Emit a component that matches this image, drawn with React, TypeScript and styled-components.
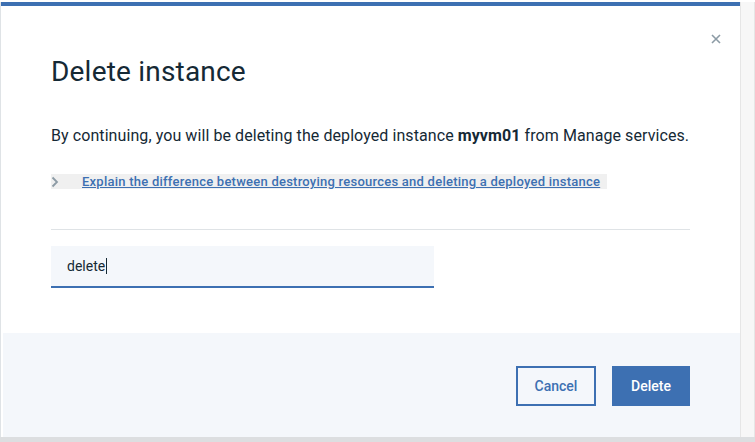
import React from "react";
import styled, { createGlobalStyle } from "styled-components";

const Global = createGlobalStyle`
  html, body { margin: 0; padding: 0; background: #ffffff; }
  body { font-family: Roboto, "Liberation Sans", sans-serif; color: #152935; }
  * { box-sizing: border-box; }
`;

const Page = styled.div`
  width: 755px;
  height: 442px;
  display: flex;
  flex-direction: column;
  overflow: hidden;
  background: #ffffff;
`;

const Stage = styled.div`
  flex: 1;
  display: flex;
  padding-top: 2px;
  background: #ffffff;
`;

const LeftEdge = styled.div`
  width: 1px;
  background: #dfe3e6;
`;

const Modal = styled.div`
  width: 739px;
  display: flex;
  flex-direction: column;
  border-top: 4px solid #3d70b2;
  background: #ffffff;
`;

const RightGutter = styled.div`
  flex: 1;
  border-left: 1px solid #e6e6e6;
  border-right: 1px solid #e6e6e6;
  background: #f7f7f7;
`;

const BottomShadow = styled.div`
  height: 5px;
  background: #dcdee0;
`;

const Header = styled.div`
  position: relative;
  padding: 50px 50px 0 50px;
`;

const Title = styled.h2`
  margin: 0;
  font-size: 28px;
  font-weight: 400;
  line-height: 32px;
  letter-spacing: 0.2px;
  color: #152935;
`;

const Close = styled.button`
  position: absolute;
  top: 26px;
  right: 17px;
  width: 14px;
  height: 14px;
  padding: 0;
  border: none;
  background: transparent;
  display: flex;
  align-items: center;
  justify-content: center;
`;

const Body = styled.div`
  flex: 1;
  padding: 0 50px;
  display: flex;
  flex-direction: column;
`;

const Para = styled.p`
  margin: 37px 0 0 0;
  font-size: 16px;
  line-height: 22px;
  letter-spacing: 0.08px;
  white-space: nowrap;
  color: #152935;
  b { font-weight: 700; }
`;

const Disclosure = styled.div`
  margin-top: 27px;
  height: 15px;
  width: 556px;
  display: flex;
  align-items: center;
  background: #f0f0f0;
`;

const Chevron = styled.span`
  width: 31px;
  display: flex;
  align-items: center;
`;

const LinkText = styled.a`
  font-size: 13px;
  font-weight: 500;
  letter-spacing: 0.24px;
  color: #3d70b2;
  text-decoration: underline;
  white-space: nowrap;
`;

const Rule = styled.hr`
  margin: 40px 0 0 0;
  border: none;
  border-top: 1px solid #dfe3e6;
`;

const Field = styled.div`
  margin-top: 16px;
  width: 383px;
  height: 42px;
  background: #f4f7fb;
  border-bottom: 2px solid #3d70b2;
  display: flex;
  align-items: center;
  padding-left: 16px;
  font-size: 14px;
  color: #152935;
`;

const Caret = styled.span`
  display: inline-block;
  width: 1px;
  height: 16px;
  background: #152935;
  margin-left: 1px;
`;

const Footer = styled.div`
  height: 104px;
  margin-left: 2px;
  background: #f4f7fb;
  display: flex;
  justify-content: flex-end;
  align-items: flex-start;
  gap: 16px;
  padding: 33px 50px 0 0;
`;

const Button = styled.button<{ $primary?: boolean }>`
  height: 40px;
  width: ${(p) => (p.$primary ? "78px" : "80px")};
  font-family: inherit;
  font-size: 14px;
  font-weight: 500;
  border: 2px solid #3d70b2;
  background: ${(p) => (p.$primary ? "#3d70b2" : "transparent")};
  color: ${(p) => (p.$primary ? "#ffffff" : "#3d70b2")};
  padding: 0;
`;

export default function App() {
  return (
    <>
      <Global />
      <Page>
        <Stage>
          <LeftEdge />
          <Modal>
            <Header>
              <Title>Delete instance</Title>
              <Close aria-label="Close">
                <svg width="10" height="10" viewBox="0 0 10 10">
                  <path d="M1 1 L9 9 M9 1 L1 9" stroke="#8c9ba5" strokeWidth="1.6" />
                </svg>
              </Close>
            </Header>
            <Body>
              <Para>
                By continuing, you will be deleting the deployed instance <b>myvm01</b> from Manage services.
              </Para>
              <Disclosure>
                <Chevron>
                  <svg width="8" height="12" viewBox="0 0 8 12">
                    <path d="M1.5 1.5 L6 6 L1.5 10.5" stroke="#8c9ba5" strokeWidth="1.8" fill="none" />
                  </svg>
                </Chevron>
                <LinkText href="#">
                  Explain the difference between destroying resources and deleting a deployed instance
                </LinkText>
              </Disclosure>
              <Rule />
              <Field>
                delete<Caret />
              </Field>
            </Body>
            <Footer>
              <Button>Cancel</Button>
              <Button $primary>Delete</Button>
            </Footer>
          </Modal>
          <RightGutter />
        </Stage>
        <BottomShadow />
      </Page>
    </>
  );
}
